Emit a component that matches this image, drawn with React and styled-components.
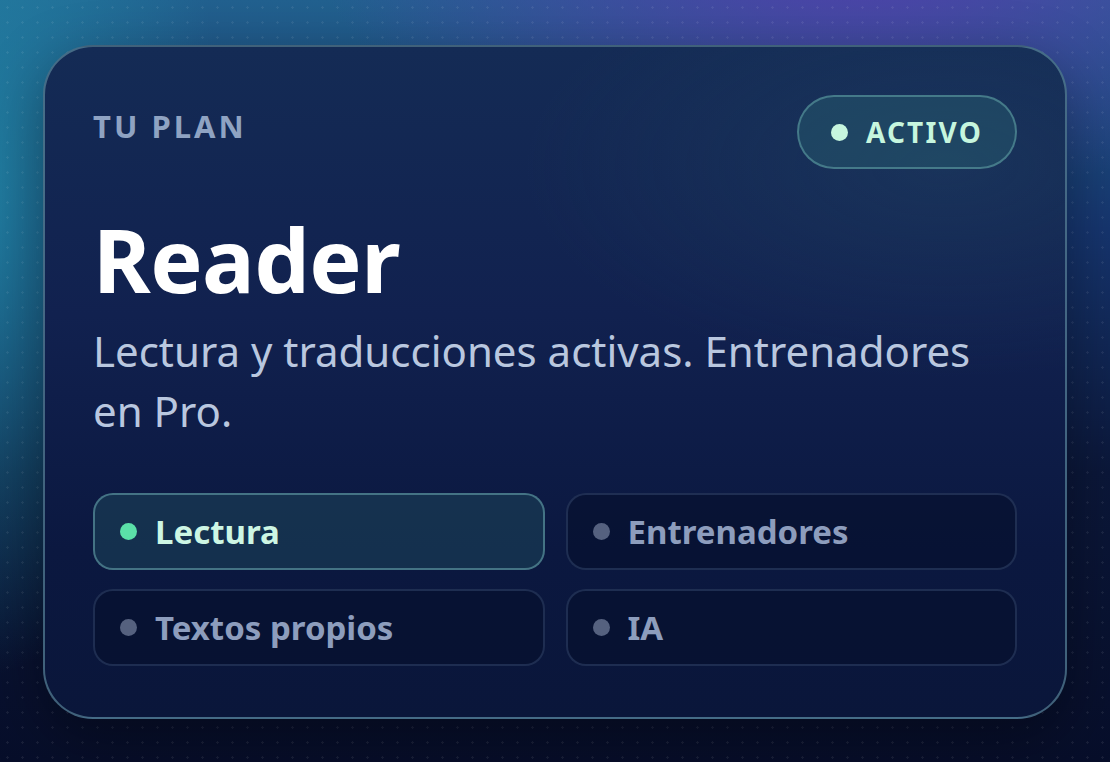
import React from 'react'
import styled, { createGlobalStyle } from 'styled-components'

const GlobalStyle = createGlobalStyle`
  html, body {
    margin: 0;
    padding: 0;
    height: 100%;
  }
  body {
    font-family: "Noto Sans", "Open Sans", sans-serif;
    background: #0a1233;
  }
  #root {
    height: 100%;
  }
`

const Page = styled.div`
  width: 1110px;
  height: 762px;
  box-sizing: border-box;
  padding: 45px 43px 0 43px;
  overflow: hidden;
  background:
    radial-gradient(circle, rgba(255, 255, 255, 0.07) 1px, transparent 1.4px) 0 0 / 15px 15px,
    radial-gradient(ellipse 360px 640px at -40px 200px, rgba(34, 140, 170, 0.9), transparent 75%),
    radial-gradient(ellipse 760px 360px at 860px -60px, rgba(88, 60, 175, 0.95), transparent 72%),
    linear-gradient(180deg, #22618f 0%, #16356e 30%, #0b1739 62%, #070e2a 100%);
`

const Card = styled.section`
  box-sizing: border-box;
  width: 1024px;
  height: 674px;
  border-radius: 50px;
  border: 2px solid rgba(110, 160, 175, 0.55);
  padding: 48px 48px 0 48px;
  background:
    radial-gradient(ellipse 600px 300px at 900px 120px, rgba(40, 80, 110, 0.3), transparent 70%),
    linear-gradient(180deg, #142b55 0%, #11214f 40%, #0b1840 75%, #0a163a 100%);
  box-shadow: 0 20px 60px rgba(0, 0, 0, 0.35);
  display: flex;
  flex-direction: column;
`

const Header = styled.div`
  display: flex;
  justify-content: space-between;
  align-items: flex-start;
`

const Eyebrow = styled.div`
  font-size: 31px;
  font-weight: 700;
  letter-spacing: 3px;
  color: #8fa3c2;
  margin-top: 10px;
`

const Badge = styled.div`
  display: flex;
  align-items: center;
  gap: 18px;
  height: 74px;
  box-sizing: border-box;
  padding: 0 32px 0 32px;
  border-radius: 40px;
  border: 2px solid rgba(100, 165, 170, 0.55);
  background: rgba(40, 95, 110, 0.45);
  font-size: 28px;
  font-weight: 700;
  letter-spacing: 2.2px;
  color: #c6f6de;
`

const Dot = styled.span`
  width: ${(props) => props.size || 16}px;
  height: ${(props) => props.size || 16}px;
  border-radius: 50%;
  flex-shrink: 0;
  background: ${(props) => props.color};
`

const Title = styled.h1`
  margin: 46px 0 0 0;
  font-size: 88px;
  line-height: 1;
  font-weight: 700;
  color: #ffffff;
  letter-spacing: -0.6px;
`

const Subtitle = styled.p`
  margin: 18px 0 0 0;
  max-width: 900px;
  font-size: 42px;
  line-height: 60px;
  font-weight: 400;
  color: #b9c7df;
`

const Features = styled.div`
  display: grid;
  grid-template-columns: 1fr 1fr;
  column-gap: 21px;
  row-gap: 19px;
  margin-top: 52px;
`

const Feature = styled.div`
  height: 77px;
  box-sizing: border-box;
  display: flex;
  align-items: center;
  gap: 18px;
  padding: 0 25px;
  border-radius: 20px;
  border: 2px solid ${(props) => (props.active ? 'rgba(100, 160, 170, 0.6)' : 'rgba(60, 80, 120, 0.45)')};
  background: ${(props) => (props.active ? 'rgba(30, 70, 90, 0.55)' : 'rgba(6, 14, 42, 0.55)')};
  font-size: 33px;
  font-weight: 700;
  color: ${(props) => (props.active ? '#cdf6e4' : '#8d9dbd')};
`

const features = [
  { label: 'Lectura', active: true },
  { label: 'Entrenadores', active: false },
  { label: 'Textos propios', active: false },
  { label: 'IA', active: false },
]

export default function App() {
  return (
    <>
      <GlobalStyle />
      <Page>
        <Card>
          <Header>
            <Eyebrow>TU PLAN</Eyebrow>
            <Badge>
              <Dot size={17} color="#c6f6de" />
              ACTIVO
            </Badge>
          </Header>
          <Title>Reader</Title>
          <Subtitle>Lectura y traducciones activas. Entrenadores en Pro.</Subtitle>
          <Features>
            {features.map((f) => (
              <Feature key={f.label} active={f.active}>
                <Dot size={17} color={f.active ? '#5be0a8' : '#55617f'} />
                {f.label}
              </Feature>
            ))}
          </Features>
        </Card>
      </Page>
    </>
  )
}
